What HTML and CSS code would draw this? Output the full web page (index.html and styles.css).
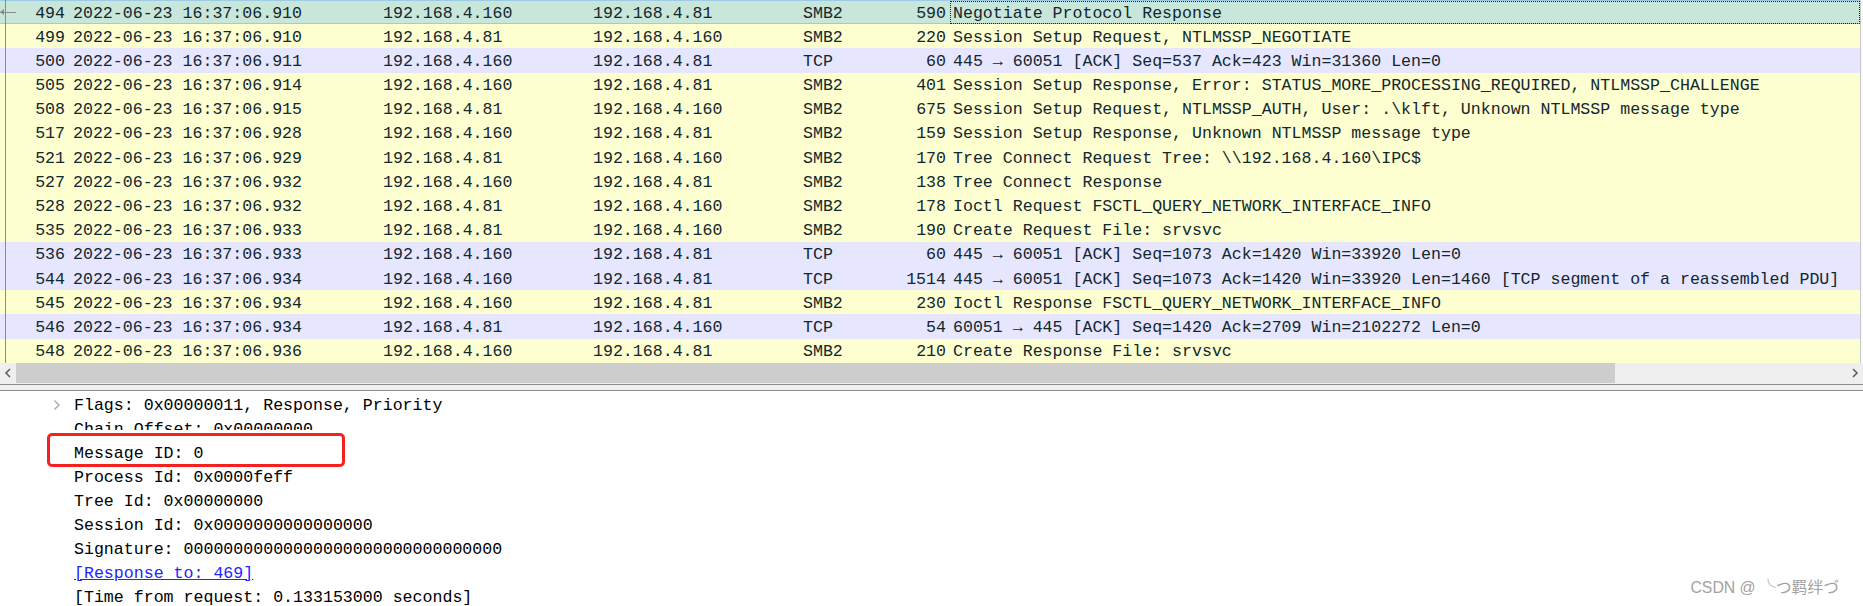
FILE: index.html
```html
<!DOCTYPE html>
<html>
<head>
<meta charset="utf-8">
<link rel="stylesheet" href="styles.css">
</head>
<body>
<div class="app">
  <div class="list">
    <div class="rows">
      <div class="row smb sel"><span class="no">494</span><span>2022-06-23 16:37:06.910</span><span>192.168.4.160</span><span>192.168.4.81</span><span>SMB2</span><span class="len">590</span><span class="info focus">Negotiate Protocol Response</span></div>
      <div class="row smb"><span class="no">499</span><span>2022-06-23 16:37:06.910</span><span>192.168.4.81</span><span>192.168.4.160</span><span>SMB2</span><span class="len">220</span><span class="info">Session Setup Request, NTLMSSP_NEGOTIATE</span></div>
      <div class="row tcp"><span class="no">500</span><span>2022-06-23 16:37:06.911</span><span>192.168.4.160</span><span>192.168.4.81</span><span>TCP</span><span class="len">60</span><span class="info">445 → 60051 [ACK] Seq=537 Ack=423 Win=31360 Len=0</span></div>
      <div class="row smb"><span class="no">505</span><span>2022-06-23 16:37:06.914</span><span>192.168.4.160</span><span>192.168.4.81</span><span>SMB2</span><span class="len">401</span><span class="info">Session Setup Response, Error: STATUS_MORE_PROCESSING_REQUIRED, NTLMSSP_CHALLENGE</span></div>
      <div class="row smb"><span class="no">508</span><span>2022-06-23 16:37:06.915</span><span>192.168.4.81</span><span>192.168.4.160</span><span>SMB2</span><span class="len">675</span><span class="info">Session Setup Request, NTLMSSP_AUTH, User: .\klft, Unknown NTLMSSP message type</span></div>
      <div class="row smb"><span class="no">517</span><span>2022-06-23 16:37:06.928</span><span>192.168.4.160</span><span>192.168.4.81</span><span>SMB2</span><span class="len">159</span><span class="info">Session Setup Response, Unknown NTLMSSP message type</span></div>
      <div class="row smb"><span class="no">521</span><span>2022-06-23 16:37:06.929</span><span>192.168.4.81</span><span>192.168.4.160</span><span>SMB2</span><span class="len">170</span><span class="info">Tree Connect Request Tree: \\192.168.4.160\IPC$</span></div>
      <div class="row smb"><span class="no">527</span><span>2022-06-23 16:37:06.932</span><span>192.168.4.160</span><span>192.168.4.81</span><span>SMB2</span><span class="len">138</span><span class="info">Tree Connect Response</span></div>
      <div class="row smb"><span class="no">528</span><span>2022-06-23 16:37:06.932</span><span>192.168.4.81</span><span>192.168.4.160</span><span>SMB2</span><span class="len">178</span><span class="info">Ioctl Request FSCTL_QUERY_NETWORK_INTERFACE_INFO</span></div>
      <div class="row smb"><span class="no">535</span><span>2022-06-23 16:37:06.933</span><span>192.168.4.81</span><span>192.168.4.160</span><span>SMB2</span><span class="len">190</span><span class="info">Create Request File: srvsvc</span></div>
      <div class="row tcp"><span class="no">536</span><span>2022-06-23 16:37:06.933</span><span>192.168.4.160</span><span>192.168.4.81</span><span>TCP</span><span class="len">60</span><span class="info">445 → 60051 [ACK] Seq=1073 Ack=1420 Win=33920 Len=0</span></div>
      <div class="row tcp"><span class="no">544</span><span>2022-06-23 16:37:06.934</span><span>192.168.4.160</span><span>192.168.4.81</span><span>TCP</span><span class="len">1514</span><span class="info">445 → 60051 [ACK] Seq=1073 Ack=1420 Win=33920 Len=1460 [TCP segment of a reassembled PDU]</span></div>
      <div class="row smb"><span class="no">545</span><span>2022-06-23 16:37:06.934</span><span>192.168.4.160</span><span>192.168.4.81</span><span>SMB2</span><span class="len">230</span><span class="info">Ioctl Response FSCTL_QUERY_NETWORK_INTERFACE_INFO</span></div>
      <div class="row tcp"><span class="no">546</span><span>2022-06-23 16:37:06.934</span><span>192.168.4.81</span><span>192.168.4.160</span><span>TCP</span><span class="len">54</span><span class="info">60051 → 445 [ACK] Seq=1420 Ack=2709 Win=2102272 Len=0</span></div>
      <div class="row smb"><span class="no">548</span><span>2022-06-23 16:37:06.936</span><span>192.168.4.160</span><span>192.168.4.81</span><span>SMB2</span><span class="len">210</span><span class="info">Create Response File: srvsvc</span></div>
      <div class="related"><span class="rel-arrow"></span></div>
    </div>
    <div class="vstrip"></div>
  </div>
  <div class="hscroll">
    <span class="sbtn"><svg width="8" height="10" viewBox="0 0 8 10"><path d="M6 1 L2 5 L6 9" fill="none" stroke="#606060" stroke-width="1.6"/></svg></span>
    <div class="track"><div class="thumb"></div></div>
    <span class="sbtn"><svg width="8" height="10" viewBox="0 0 8 10"><path d="M2 1 L6 5 L2 9" fill="none" stroke="#606060" stroke-width="1.6"/></svg></span>
  </div>
  <div class="splitter"></div>
  <div class="details">
    <div class="drow"><span class="chev"><svg width="8" height="12" viewBox="0 0 8 12"><path d="M1.5 1.5 L6 6 L1.5 10.5" fill="none" stroke="#a8a8a8" stroke-width="1.4"/></svg></span>Flags: 0x00000011, Response, Priority</div>
    <div class="drow">Chain Offset: 0x00000000</div>
    <div class="drow marked">Message ID: 0</div>
    <div class="drow">Process Id: 0x0000feff</div>
    <div class="drow">Tree Id: 0x00000000</div>
    <div class="drow">Session Id: 0x0000000000000000</div>
    <div class="drow">Signature: 00000000000000000000000000000000</div>
    <div class="drow"><a class="link">[Response to: 469]</a></div>
    <div class="drow">[Time from request: 0.133153000 seconds]</div>
  </div>
  <div class="watermark">CSDN @ ╰つ羁绊づ</div>
</div>
</body>
</html>
```

FILE: styles.css
```css
html, body {
  margin: 0;
  padding: 0;
  background: #ffffff;
  overflow: hidden;
}

.app {
  position: relative;
  width: 1863px;
  height: 606px;
  overflow: hidden;
  font-family: "Liberation Mono", "DejaVu Sans Mono", monospace;
  font-size: 16.6px;
}

.list {
  display: flex;
}

.rows {
  position: relative;
  flex: 1;
}

.row {
  display: grid;
  grid-template-columns: 69px 310px 210px 210px 71px 80px 1fr;
  height: 24.2px;
  box-sizing: border-box;
  color: #12272e;
  white-space: pre;
}

.row span {
  display: block;
  padding-top: 3.5px;
  line-height: 20.7px;
  padding-left: 4px;
  overflow: hidden;
}

.row .no,
.row .len {
  text-align: right;
  padding-left: 0;
  padding-right: 4px;
}

.row .info {
  padding-left: 3px;
}

.smb { background: #feffd0; }
.tcp { background: #e7e6ff; }

.row.sel {
  background: #c9e6da;
  box-shadow: inset 0 1px 0 #9ccbe6, inset 0 -1px 0 #9ccbe6;
}

.row .focus {
  outline: 1px dotted #202020;
  outline-offset: -1px;
  margin-top: 1px;
  height: 23px;
  box-sizing: border-box;
  padding-top: 2.5px;
}

.related {
  position: absolute;
  left: 5px;
  top: 0;
  bottom: 0;
  width: 1px;
  background: #8c8c8c;
}

.rel-arrow {
  position: absolute;
  left: -5px;
  top: 12px;
  width: 16px;
  height: 1px;
  background: #8c8c8c;
}

.rel-arrow::before {
  content: "";
  position: absolute;
  left: 0;
  top: -3px;
  width: 0;
  height: 0;
  border-top: 3.5px solid transparent;
  border-bottom: 3.5px solid transparent;
  border-right: 4px solid #8c8c8c;
}

.vstrip {
  width: 3px;
  border-left: 1px solid #c8c8c8;
  box-sizing: border-box;
  background: #fbfbfb;
}

.hscroll {
  display: flex;
  height: 21px;
  background: #efefef;
  align-items: stretch;
}

.sbtn {
  width: 16px;
  display: flex;
  align-items: center;
  justify-content: center;
}

.track {
  flex: 1;
  display: flex;
  align-items: stretch;
  padding-bottom: 1px;
}

.thumb {
  width: 1599px;
  background: #cdcdcd;
}

.splitter {
  height: 5px;
  background: #f0f0f0;
  border-top: 1px solid #8e8e8e;
  border-bottom: 1px solid #8e8e8e;
}

.details {
  padding-top: 1px;
  color: #000000;
}

.drow {
  position: relative;
  height: 24px;
  box-sizing: border-box;
  padding-top: 3px;
  line-height: 21px;
  padding-left: 74px;
  white-space: pre;
}

.chev {
  position: absolute;
  left: 53px;
  top: 7px;
  width: 8px;
  height: 12px;
}

.chev svg {
  display: block;
}

.marked {
  z-index: 0;
}

.marked::before {
  content: "";
  position: absolute;
  z-index: -1;
  left: 47px;
  top: -7px;
  width: 298px;
  height: 34px;
  box-sizing: border-box;
  border: 3px solid #f5211f;
  border-radius: 5px;
  background: #ffffff;
  box-shadow: 0 -3px 0 #ffffff;
}

.link {
  color: #2424ff;
  text-decoration: underline;
}

.watermark {
  position: absolute;
  right: 24px;
  bottom: 8px;
  font-family: "Liberation Sans", "Noto Sans CJK SC", sans-serif;
  font-size: 15.8px;
  line-height: 20px;
  color: #a2a2a2;
  white-space: pre;
}
```
